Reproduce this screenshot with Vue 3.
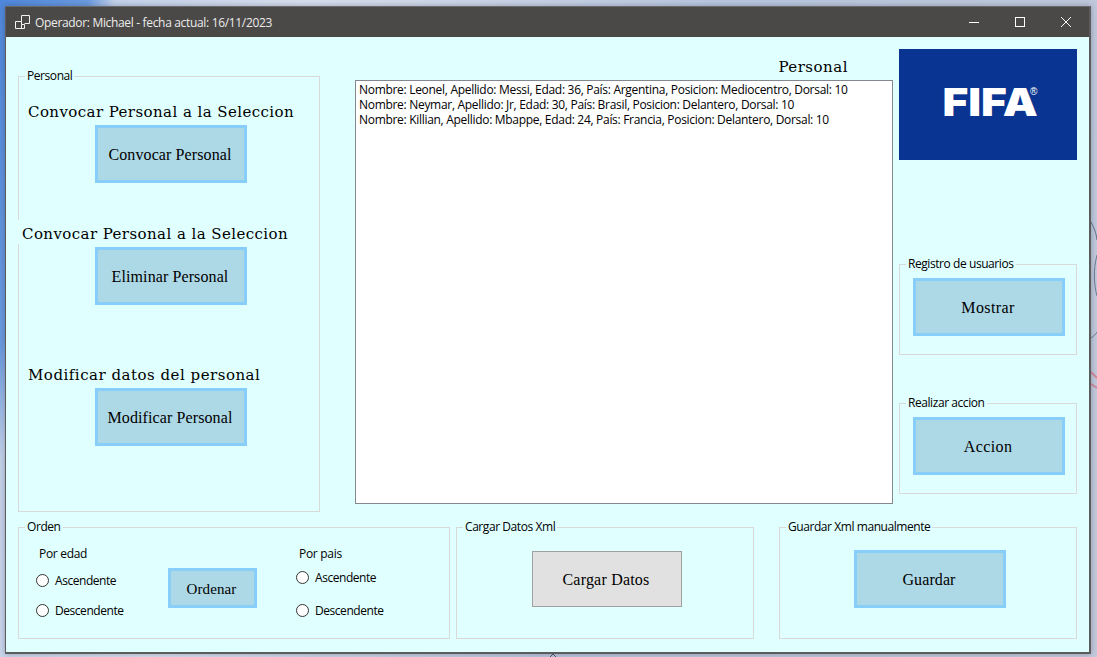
<script setup>
const operador = "Michael";
const fecha = "16/11/2023";

const personal = [
  "Nombre: Leonel, Apellido: Messi, Edad: 36, País: Argentina, Posicion: Mediocentro, Dorsal: 10",
  "Nombre: Neymar, Apellido: Jr, Edad: 30, País: Brasil, Posicion: Delantero, Dorsal: 10",
  "Nombre: Killian, Apellido: Mbappe, Edad: 24, País: Francia, Posicion: Delantero, Dorsal: 10",
];
</script>

<template>
  <div class="desktop">
    <svg class="wallpaper" width="1097" height="657" viewBox="0 0 1097 657" fill="none">
      <path d="M1091 222 C1094 228 1096 232 1097 240" stroke="#5f6d8c" stroke-width="1" />
      <path d="M1097 255 C1093 270 1094 285 1097 296 M1091 338 C1094 336 1096 334 1097 332" stroke="#6d7a96" stroke-width="1" />
      <path d="M1091 372 L1097 378 M1091 384 L1097 388" stroke="#d08a9c" stroke-width="2" />
      <path d="M550 657 L553 654 L556 657" stroke="#4c5468" stroke-width="1" />
    </svg>

    <div class="window">
      <header class="titlebar">
        <svg class="app-icon" width="16" height="14" viewBox="0 0 16 14" fill="none" stroke="#f2f2f2" stroke-width="1">
          <path d="M6.5 6.5V0.5H14.5V8.5H9.5" />
          <path d="M0.5 6.5H6.5V9.5H9.5V13.5H0.5Z" />
          <path d="M6.5 9.5V13.5" />
        </svg>
        <span class="title">Operador: {{ operador }} - fecha actual: {{ fecha }}</span>
        <div class="caption">
          <span class="caption-btn">
            <svg width="10" height="10" viewBox="0 0 10 10" stroke="#fff" fill="none"><path d="M0 5.5H10" /></svg>
          </span>
          <span class="caption-btn">
            <svg width="10" height="10" viewBox="0 0 10 10" stroke="#fff" fill="none"><rect x="0.5" y="0.5" width="9" height="9" /></svg>
          </span>
          <span class="caption-btn">
            <svg width="10" height="10" viewBox="0 0 10 10" stroke="#fff" fill="none"><path d="M0 0L10 10M10 0L0 10" /></svg>
          </span>
        </div>
      </header>

      <main class="client">
        <div class="top">
          <fieldset class="group personal">
            <legend>Personal</legend>
            <h2 class="head head-one">Convocar Personal a la Seleccion</h2>
            <button class="btn">Convocar Personal</button>
            <h2 class="head head-two">Convocar Personal a la Seleccion</h2>
            <button class="btn">Eliminar Personal</button>
            <h2 class="head head-three">Modificar datos del personal</h2>
            <button class="btn">Modificar Personal</button>
          </fieldset>

          <section class="middle">
            <h2 class="list-title">Personal</h2>
            <ul class="list">
              <li v-for="fila in personal" :key="fila">{{ fila }}</li>
            </ul>
          </section>

          <aside class="right">
            <div class="logo">
              <span class="fifa">FIFA</span><span class="reg">®</span>
            </div>
            <fieldset class="group side registro">
              <legend>Registro de usuarios</legend>
              <button class="btn">Mostrar</button>
            </fieldset>
            <fieldset class="group side accion">
              <legend>Realizar accion</legend>
              <button class="btn">Accion</button>
            </fieldset>
          </aside>
        </div>

        <div class="bottom">
          <fieldset class="group orden">
            <legend>Orden</legend>
            <div class="orden-col">
              <span class="orden-label">Por edad</span>
              <label class="radio first"><input type="radio" name="edad" />Ascendente</label>
              <label class="radio"><input type="radio" name="edad" />Descendente</label>
            </div>
            <button class="btn btn-ordenar">Ordenar</button>
            <div class="orden-col pais">
              <span class="orden-label">Por pais</span>
              <label class="radio first"><input type="radio" name="pais" />Ascendente</label>
              <label class="radio"><input type="radio" name="pais" />Descendente</label>
            </div>
          </fieldset>

          <fieldset class="group cargar">
            <legend>Cargar Datos Xml</legend>
            <button class="btn btn-gris">Cargar Datos</button>
          </fieldset>

          <fieldset class="group guardar">
            <legend>Guardar Xml manualmente</legend>
            <button class="btn">Guardar</button>
          </fieldset>
        </div>
      </main>
    </div>
  </div>
</template>

<style>
html,
body {
  margin: 0;
  overflow: hidden;
}
</style>

<style scoped>
.desktop {
  position: relative;
  width: 1097px;
  height: 657px;
  box-sizing: border-box;
  padding: 6px 6px 0 5px;
  overflow: hidden;
  background: linear-gradient(104deg, #4f88dc 0, #6a9ae0 85px, #c4d2ea 112px, #d8dfee 300px, #b9c6de 700px, #c2cadb 1200px);
}
.wallpaper {
  position: absolute;
  left: 0;
  top: 0;
}
.window {
  position: relative;
  width: 1086px;
  height: 648px;
  box-sizing: border-box;
  border: 1px solid #5c5c5c;
  border-top: 1px solid #6a6a6a;
  border-right-width: 2px;
  border-bottom-width: 2px;
  background: #e0ffff;
  box-shadow: 0 0 6px rgba(40, 50, 70, 0.35);
  font-family: "Open Sans", "Noto Sans", sans-serif;
  font-size: 12px;
  color: #000;
}
.titlebar {
  display: flex;
  align-items: center;
  height: 30px;
  background: #4b4947;
  color: #ececec;
}
.app-icon {
  margin-left: 9px;
  margin-right: 4px;
}
.title {
  font-size: 12px;
  letter-spacing: -0.33px;
}
.caption {
  display: flex;
  margin-left: auto;
}
.caption-btn {
  display: flex;
  align-items: center;
  justify-content: center;
  width: 46px;
  height: 30px;
}
.client {
  padding: 12px 12px 0;
}
.top {
  display: grid;
  grid-template-columns: 302px 579px 178px;
  height: 464px;
}
.group {
  box-sizing: border-box;
  min-width: 0;
  margin: 0;
  padding: 0;
  border: 1px solid #d9d9d9;
  font-size: 12px;
}
.group legend {
  margin-left: 6px;
  padding: 0 2px;
  height: 16px;
  line-height: 16px;
  letter-spacing: -0.43px;
  white-space: nowrap;
}
.btn {
  display: block;
  box-sizing: border-box;
  width: 152px;
  height: 58px;
  padding: 2px 2px 0 0;
  border: 3px solid #87cefa;
  border-radius: 0;
  background: #add8e6;
  color: #000;
  font-family: "Liberation Serif", serif;
  font-size: 16px;
  letter-spacing: 0.1px;
}
.personal {
  margin-top: 19px;
  height: 444px;
}
.head {
  box-sizing: border-box;
  height: 24px;
  margin: 0;
  font-family: "DejaVu Serif", serif;
  font-size: 15px;
  font-weight: 400;
  line-height: 24px;
  letter-spacing: 0.42px;
  white-space: nowrap;
}
.personal .btn {
  margin-left: 76px;
}
.head-one {
  margin-top: 16px;
  margin-bottom: 1px;
  padding-left: 9px;
}
.head-two {
  position: relative;
  width: max-content;
  margin-top: 37px;
  margin-bottom: 3px;
  margin-left: -1px;
  padding-left: 4px;
  line-height: 28px;
  background: #e0ffff;
}
.head-three {
  margin-top: 58px;
  margin-bottom: 1px;
  padding-left: 9px;
  letter-spacing: 0.5px;
}
.middle {
  display: flex;
  flex-direction: column;
  align-items: flex-end;
  padding: 0 6px 0 35px;
}
.list-title {
  margin: 8px 45px 0 0;
  height: 23px;
  font-family: "DejaVu Serif", serif;
  font-size: 15px;
  font-weight: 400;
  line-height: 20px;
  letter-spacing: 0.5px;
}
.list {
  box-sizing: border-box;
  width: 538px;
  height: 424px;
  margin: 0;
  padding: 1px 3px;
  border: 1px solid #828790;
  background: #fff;
  list-style: none;
  line-height: 15px;
  letter-spacing: -0.3px;
  white-space: nowrap;
}
.right {
  display: flex;
  flex-direction: column;
}
.logo {
  position: relative;
  display: flex;
  align-items: flex-start;
  justify-content: center;
  box-sizing: border-box;
  height: 111px;
  padding: 31px 0 0 4px;
  background: #0a3491;
  color: #fff;
}
.fifa {
  font-family: Inter, "Liberation Sans", sans-serif;
  font-size: 39px;
  font-weight: 900;
  line-height: 44px;
  transform: scaleX(1.13);
}
.reg {
  position: absolute;
  left: 131px;
  top: 38px;
  font-family: "Liberation Sans", sans-serif;
  font-size: 10px;
  line-height: 10px;
}
.side {
  height: 99px;
}
.side .btn {
  margin: 6px 0 0 13px;
  letter-spacing: 0.4px;
}
.registro {
  margin-top: 96px;
}
.accion {
  margin-top: 40px;
}
.bottom {
  display: flex;
  height: 120px;
  margin-top: 6px;
}
.orden {
  position: relative;
  display: flex;
  width: 432px;
}
.orden-col {
  display: flex;
  flex-direction: column;
  width: 130px;
  margin-left: 17px;
  padding-top: 11px;
}
.orden-label {
  height: 16px;
  margin-left: 3px;
  line-height: 16px;
  letter-spacing: -0.3px;
}
.radio {
  display: flex;
  align-items: center;
  height: 20px;
  margin-top: 10px;
  letter-spacing: -0.45px;
}
.radio.first {
  margin-top: 8px;
}
.radio input {
  appearance: none;
  box-sizing: border-box;
  width: 13px;
  height: 13px;
  margin: 0 6px 0 0;
  border: 1px solid #333;
  border-radius: 50%;
  background: #fff;
}
.btn-ordenar {
  width: 89px;
  height: 40px;
  margin: 33px 0 0 2px;
  flex: none;
  font-size: 15px;
}
.pais {
  margin-left: 39px;
}
.pais .radio.first {
  margin-top: 5px;
}
.pais .radio:not(.first) {
  margin-top: 13px;
}
.cargar {
  width: 298px;
  margin-left: 6px;
}
.cargar .btn {
  width: 150px;
  height: 56px;
  margin: 16px 0 0 75px;
  letter-spacing: 0.2px;
}
.btn-gris {
  border: 1px solid #a0a0a0;
  background: #e1e1e1;
}
.guardar {
  width: 298px;
  margin-left: 25px;
}
.guardar .btn {
  margin: 15px 0 0 74px;
}
</style>
